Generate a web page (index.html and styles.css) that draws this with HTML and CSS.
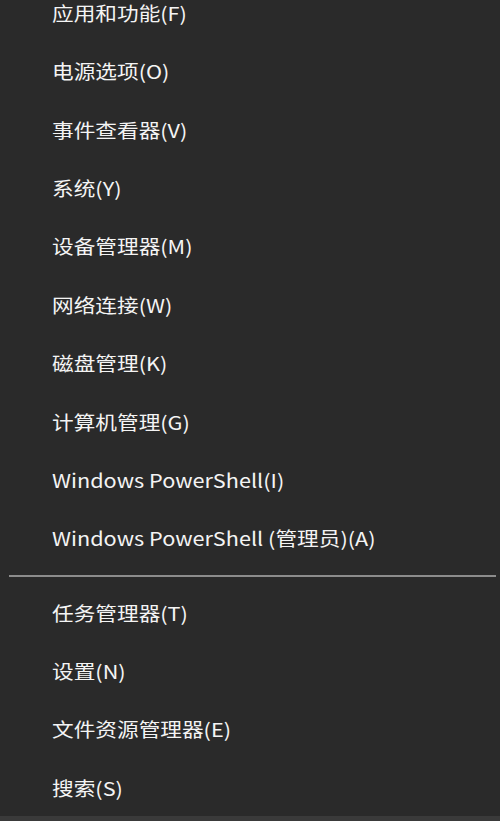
FILE: index.html
```html
<!DOCTYPE html>
<html lang="zh-CN">
<head>
    <meta charset="UTF-8">
    <meta name="viewport" content="width=device-width, initial-scale=1.0">
    <title>快速链接菜单</title>
    <link rel="stylesheet" href="styles.css">
</head>
<body>
    <div class="menu">
        <ul class="menu-list">
            <li class="menu-item"><span class="label">应用和功能(F)</span></li>
            <li class="menu-item"><span class="label">电源选项(O)</span></li>
            <li class="menu-item"><span class="label">事件查看器(V)</span></li>
            <li class="menu-item"><span class="label">系统(Y)</span></li>
            <li class="menu-item"><span class="label">设备管理器(M)</span></li>
            <li class="menu-item"><span class="label">网络连接(W)</span></li>
            <li class="menu-item"><span class="label">磁盘管理(K)</span></li>
            <li class="menu-item"><span class="label">计算机管理(G)</span></li>
            <li class="menu-item"><span class="label">Windows PowerShell(I)</span></li>
            <li class="menu-item"><span class="label">Windows PowerShell (管理员)(A)</span></li>
            <li class="separator"></li>
            <li class="menu-item"><span class="label">任务管理器(T)</span></li>
            <li class="menu-item"><span class="label">设置(N)</span></li>
            <li class="menu-item"><span class="label">文件资源管理器(E)</span></li>
            <li class="menu-item"><span class="label">搜索(S)</span></li>
        </ul>
    </div>
</body>
</html>
```

FILE: styles.css
```css
:root {
    --menu-bg: #2a2a2a;
    --page-bg: #3a3a3a;
    --text-color: #f4f4f4;
    --separator-color: #8c8c8c;
}

html {
    background-color: var(--page-bg);
}

body {
    margin: 0;
    font-family: "Noto Sans CJK SC", "Open Sans", sans-serif;
    color: var(--text-color);
}

.menu {
    background-color: var(--menu-bg);
    height: 816px;
    overflow: hidden;
}

.menu-list {
    list-style: none;
    margin: -16px 0 0 0;
    padding: 0;
}

.menu-item {
    height: 58.4px;
    display: flex;
    align-items: center;
    padding-left: 52px;
    font-size: 19px;
    line-height: 1.2;
    white-space: nowrap;
}

/* the screenshot is a little stretched sideways */
.label {
    display: inline-block;
    transform: scaleX(1.14);
    transform-origin: 0 50%;
}

.separator {
    height: 2px;
    margin: 7px 4px 7px 9px;
    background-color: var(--separator-color);
}
```
